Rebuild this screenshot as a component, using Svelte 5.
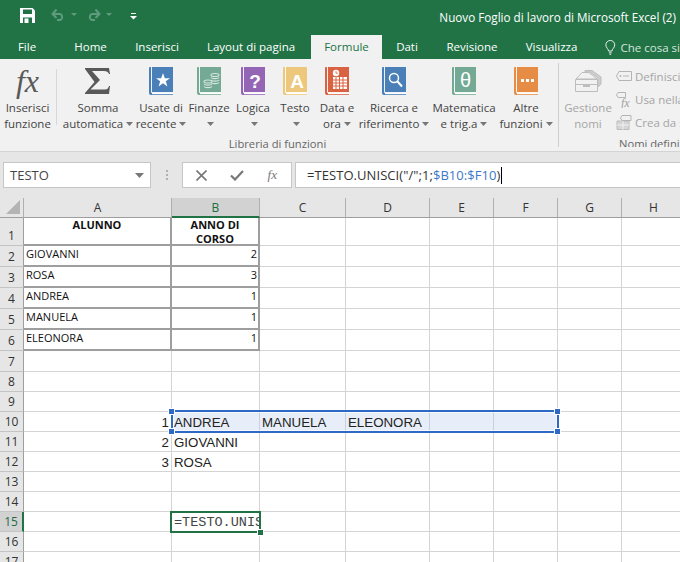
<script>
  // Excel: scheda Formule con TESTO.UNISCI in modifica
  const tabs = ['File', 'Home', 'Inserisci', 'Layout di pagina', 'Formule', 'Dati', 'Revisione', 'Visualizza']
  const columns = ['A', 'B', 'C', 'D', 'E', 'F', 'G', 'H']
  const rows = Array.from({ length: 17 }, (_, i) => i + 1)

  const values = {
    A1: 'ALUNNO', B1: 'ANNO DI CORSO',
    A2: 'GIOVANNI', B2: '2',
    A3: 'ROSA', B3: '3',
    A4: 'ANDREA', B4: '1',
    A5: 'MANUELA', B5: '1',
    A6: 'ELEONORA', B6: '1',
    A10: '1', B10: 'ANDREA', C10: 'MANUELA', D10: 'ELEONORA',
    A11: '2', B11: 'GIOVANNI',
    A12: '3', B12: 'ROSA',
    B15: '=TESTO.UNIS'
  }

  function cellClass(col, row) {
    const list = ['cell']
    if (row <= 6 && (col === 'A' || col === 'B')) list.push('tbl')
    if (row === 1) list.push('head')
    if (row >= 2 && row <= 6 && col === 'B') list.push('num')
    if (row >= 10 && row <= 12) list.push('big')
    if (row >= 10 && row <= 12 && col === 'A') list.push('right')
    if (row === 10 && 'BCDEF'.includes(col)) list.push('sel')
    if (row === 15 && col === 'B') list.push('edit')
    return list.join(' ')
  }
</script>

{#snippet caret()}
  <svg class="caret" width="7" height="4" viewBox="0 0 7 4"><path d="M0 0h7L3.5 4z" fill="#777" /></svg>
{/snippet}

{#snippet book(color)}
  <path d="M0 1Q0 0 1 0H24V28H2Q0 28 0 26z" fill={color} />
  <path d="M2.5 0V25.5H24" fill="none" stroke="#fff" stroke-width="1" opacity=".9" />
  <path d="M3 26.5H24" stroke="#fff" stroke-width="1.4" />
{/snippet}

<div class="app">
  <header class="title">
    <div class="qat">
      <svg class="save" width="15" height="15" viewBox="0 0 15 15">
        <path d="M0 0H12.5L15 2.5V15H0z" fill="#fff" />
        <path d="M3 1.5H12V6H3z" fill="#217346" />
        <path d="M3 9.5H12V15H3z" fill="#217346" />
        <path d="M4.5 10.5H8.5V15H4.5z" fill="#fff" />
      </svg>
      <svg class="undo" width="15" height="13" viewBox="0 0 15 13">
        <path d="M1.5 6H9.5A3.5 3.5 0 0 1 9.5 12H6M5.5 1.5L1.5 6L5.5 10" fill="none" stroke="#5f9c7d" stroke-width="2" />
      </svg>
      <svg class="qcaret" width="6" height="3" viewBox="0 0 6 3"><path d="M0 0h6L3 3z" fill="#5f9c7d" /></svg>
      <svg class="redo" width="15" height="13" viewBox="0 0 15 13">
        <path d="M13.5 6H5.5A3.5 3.5 0 0 0 5.5 12H9M9.5 1.5L13.5 6L9.5 10" fill="none" stroke="#5f9c7d" stroke-width="2" />
      </svg>
      <svg class="qcaret" width="6" height="3" viewBox="0 0 6 3"><path d="M0 0h6L3 3z" fill="#5f9c7d" /></svg>
      <svg class="custom" width="7" height="7" viewBox="0 0 7 7">
        <path d="M1 0.5H6" stroke="#fff" /><path d="M0 3H7L3.5 6.5z" fill="#fff" />
      </svg>
    </div>
    <div class="doc">Nuovo Foglio di lavoro di Microsoft Excel (2)</div>
  </header>

  <nav class="tabs">
    {#each tabs as tab}
      <div class="tab" class:home={tab === 'Home'} class:current={tab === 'Formule'}>{tab}</div>
    {/each}
    <div class="tell">
      <svg width="12" height="17" viewBox="0 0 12 17">
        <path d="M4 12.5C4 10 1 9 1 5.5A5 5 0 0 1 11 5.5C11 9 8 10 8 12.5zM4.5 14.5H7.5M5 16.2H7" fill="none" stroke="#fff" stroke-width="1" />
      </svg>
      <span>Che cosa si</span>
    </div>
  </nav>

  <section class="ribbon">
    <div class="library">
      <div class="cmds">
        <div class="cmd w-fx">
          <span class="fx-big">fx</span>
          <span class="lbl">Inserisci</span>
          <span class="lbl">funzione</span>
        </div>
        <div class="thin"></div>
        <div class="cmd w-sum">
          <svg class="ico" width="26" height="28" viewBox="0 0 26 28">
            <path d="M0 1H24L25 7H24Q23 4 19 4H7L15 13L5.500 22.500H20Q23 22.500 24 19H25L24 27H0V26L9.500 15L0 2z" fill="#595959" />
          </svg>
          <span class="lbl">Somma</span>
          <span class="lbl">automatica{@render caret()}</span>
        </div>
        <div class="cmd w-use">
          <svg class="ico" width="24" height="28" viewBox="0 0 24 28">
            {@render book('#4a7fb8')}
            <path d="M14 6L15.800 11.200H21L16.800 14.300L18.400 19.500L14 16.300L9.600 19.500L11.200 14.300L7 11.200H12.200z" fill="#fff" />
          </svg>
          <span class="lbl">Usate di</span>
          <span class="lbl">recente{@render caret()}</span>
        </div>
        <div class="cmd w-fin">
          <svg class="ico" width="24" height="28" viewBox="0 0 24 28">
            {@render book('#74a995')}
            <g fill="none" stroke="#d8e8e1" stroke-width="1.100">
              <ellipse cx="18" cy="8" rx="4" ry="1.500" />
              <path d="M14 10.500C15 12 21 12 22 10.500M14 13C15 14.500 21 14.500 22 13M14 15.500C15 17 21 17 22 15.500" />
              <ellipse cx="11" cy="14.500" rx="4" ry="1.500" />
              <path d="M7 17C8 18.500 14 18.500 15 17M7 19.500C8 21 14 21 15 19.500" />
            </g>
          </svg>
          <span class="lbl">Finanze</span>
          {@render caret()}
        </div>
        <div class="cmd w-log">
          <svg class="ico" width="24" height="28" viewBox="0 0 24 28">
            {@render book('#9565b5')}
            <text x="14" y="21" class="glyph">?</text>
          </svg>
          <span class="lbl">Logica</span>
          {@render caret()}
        </div>
        <div class="cmd w-txt">
          <svg class="ico" width="24" height="28" viewBox="0 0 24 28">
            {@render book('#edc77c')}
            <text x="14" y="21" class="glyph">A</text>
          </svg>
          <span class="lbl">Testo</span>
          {@render caret()}
        </div>
        <div class="cmd w-dat">
          <svg class="ico" width="24" height="28" viewBox="0 0 24 28">
            {@render book('#d96243')}
            <circle cx="11" cy="6" r="3.200" fill="#fff" />
            <path d="M11 4V6.200H13" fill="none" stroke="#d96243" stroke-width=".8" />
            <path d="M8 10H22V22H8z" fill="#fff" />
            <path d="M8 13H22M8 16H22M8 19H22M11 10V22M14.500 10V22M18 10V22" stroke="#d96243" stroke-width="1" />
          </svg>
          <span class="lbl">Data e</span>
          <span class="lbl">ora{@render caret()}</span>
        </div>
        <div class="cmd w-ric">
          <svg class="ico" width="24" height="28" viewBox="0 0 24 28">
            {@render book('#4a7fb8')}
            <circle cx="12" cy="11" r="4.500" fill="none" stroke="#fff" stroke-width="1.500" />
            <path d="M15.500 14.500L20 19.500" stroke="#fff" stroke-width="2" />
          </svg>
          <span class="lbl">Ricerca e</span>
          <span class="lbl">riferimento{@render caret()}</span>
        </div>
        <div class="cmd w-mat">
          <svg class="ico" width="24" height="28" viewBox="0 0 24 28">
            {@render book('#74a995')}
            <text x="13.500" y="20" class="glyph thin-glyph">θ</text>
          </svg>
          <span class="lbl">Matematica</span>
          <span class="lbl">e trig.a{@render caret()}</span>
        </div>
        <div class="cmd w-alt">
          <svg class="ico" width="24" height="28" viewBox="0 0 24 28">
            {@render book('#e68c45')}
            <path d="M7 12h3v3H7zM12 12h3v3h-3zM17 12h3v3h-3z" fill="#fff" />
          </svg>
          <span class="lbl">Altre</span>
          <span class="lbl">funzioni{@render caret()}</span>
        </div>
      </div>
      <div class="group-name lib-name">Libreria di funzioni</div>
    </div>

    <div class="names">
      <div class="names-cmds">
        <div class="cmd w-ges off">
          <svg class="ico" width="28" height="24" viewBox="0 0 28 24">
            <g fill="#f1f1f1" stroke="#bdbdbd" stroke-width="1">
              <path d="M11 1.500H18L27 8V15L24 18V9L16 3H11z" fill="#cfcfcf" />
              <path d="M8 3.500H15L23 10H2z" />
              <path d="M1.500 10.500H23.500V22.500H1.500z" />
            </g>
            <path d="M2 15.500H23" stroke="#bdbdbd" />
            <path d="M9 15.500H16V18H9z" fill="#bdbdbd" />
          </svg>
          <span class="lbl">Gestione</span>
          <span class="lbl">nomi</span>
        </div>
        <div class="small-list">
          <div class="small">
            <svg width="16" height="12" viewBox="0 0 16 12">
              <path d="M3 .5H15.500V9.500H3L.5 5z" fill="none" stroke="#b5b5b5" />
              <circle cx="4.500" cy="5" r="1" fill="#b5b5b5" />
              <path d="M7 5H13" stroke="#b5b5b5" />
            </svg>
            <span>Definisci</span>
          </div>
          <div class="small">
            <svg width="16" height="16" viewBox="0 0 16 16">
              <path d="M2 .5H9.500V5.500H2L.5 3z" fill="none" stroke="#b5b5b5" />
              <text x="5" y="14.500" class="small-fx">fx</text>
            </svg>
            <span>Usa nella</span>
          </div>
          <div class="small">
            <svg width="16" height="15" viewBox="0 0 16 15">
              <path d="M1 6H13V14.500H1z" fill="#d5d5d5" stroke="#bdbdbd" />
              <path d="M7 6V14.500M1 10H13" stroke="#f1f1f1" />
              <path d="M6 .5H15V5.500H6L4.500 3z" fill="#f1f1f1" stroke="#b5b5b5" />
            </svg>
            <span>Crea da s</span>
          </div>
        </div>
      </div>
      <div class="group-name names-name">Nomi definit</div>
    </div>
  </section>

  <section class="formula-row">
    <div class="name-box">
      <span>TESTO</span>
      <svg width="9" height="5" viewBox="0 0 9 5"><path d="M0 0h9L4.500 5z" fill="#777" /></svg>
    </div>
    <div class="grip"><i></i><i></i><i></i></div>
    <div class="fn-box">
      <svg width="11" height="11" viewBox="0 0 11 11"><path d="M.5 .5L10.500 10.500M10.500 .5L.5 10.500" stroke="#777" stroke-width="1.600" /></svg>
      <svg width="14" height="11" viewBox="0 0 14 11"><path d="M1 5.500L5 9.500L13 1" fill="none" stroke="#777" stroke-width="2.200" /></svg>
      <span class="fn-fx">fx</span>
    </div>
    <div class="input">
      =TESTO.UNISCI("/";1;<span class="ref">$B10:$F10</span>)<span class="cursor"></span>
    </div>
  </section>

  <section class="sheet">
    <div class="corner"><svg width="14" height="14" viewBox="0 0 14 14"><path d="M14 0V14H0z" fill="#b4b4b4" /></svg></div>
    {#each columns as col}
      <div class="col-h" class:on={col === 'B'}>{col}</div>
    {/each}
    {#each rows as row}
      <div class="row-h" class:on={row === 15} class:edge={row <= 6}>{row}</div>
      {#each columns as col}
        <div class={cellClass(col, row)}>{#if values[col + row]}<span>{values[col + row]}</span>{/if}</div>
      {/each}
    {/each}

    <!-- intervallo $B10:$F10 -->
    <div class="range">
      <i class="h tl"></i><i class="h bl"></i><i class="h tr"></i><i class="h br"></i>
    </div>
    <!-- cella attiva -->
    <div class="editor"><i></i></div>
  </section>
</div>

<style>
  :global(body) {
    margin: 0;
    background: #fff;
  }

  .app {
    position: relative;
    width: 680px;
    height: 562px;
    overflow: hidden;
    font-family: "Open Sans", "Noto Sans", sans-serif;
    color: #444;
  }

  /* barra del titolo */
  .title {
    height: 35px;
    background: #217346;
    display: flex;
    justify-content: space-between;
    overflow: hidden;
  }

  .qat {
    display: flex;
    align-items: flex-start;
  }

  .save { margin: 8px 0 0 20px; }
  .undo { margin: 8px 0 0 16px; }
  .redo { margin: 8px 0 0 9px; }
  .qcaret { margin: 13px 0 0 5px; }
  .custom { margin: 13px 0 0 18px; }

  .doc {
    align-self: flex-start;
    margin: 9px 4px 0 0;
    white-space: nowrap;
    color: #fff;
    font-size: 11.700px;
    line-height: 17px;
  }

  /* schede */
  .tabs {
    height: 24px;
    background: #217346;
    display: grid;
    grid-template-columns: 54px 69px 68px 120px 71px 50px 80px 79px 1fr;
    font-size: 11.500px;
    color: #fff;
  }

  .tab {
    text-align: center;
    line-height: 24px;
    white-space: nowrap;
  }

  .home { padding-left: 4px; }

  .tab.current {
    background: #f1f1f1;
    color: #217346;
  }

  .tell {
    display: flex;
    align-items: center;
    gap: 5px;
    padding-left: 14px;
    white-space: nowrap;
    overflow: hidden;
    color: #d5e5dc;
  }

  /* barra multifunzione */
  .ribbon {
    height: 93px;
    box-sizing: border-box;
    background: #f1f1f1;
    border-bottom: 1px solid #d4d4d4;
    display: flex;
    overflow: hidden;
    font-size: 11.500px;
    color: #444;
  }

  .library {
    width: 559px;
    box-sizing: border-box;
    flex: none;
    border-right: 1px solid #d0d0d0;
    margin: 4px 0;
  }

  .cmds {
    display: flex;
    height: 74px;
  }

  .cmd {
    display: flex;
    flex-direction: column;
    align-items: center;
    white-space: nowrap;
    flex: none;
    padding-top: 4px;
  }

  .lbl {
    line-height: 16px;
    display: block;
  }

  .ico {
    height: 28px;
    margin-bottom: 5px;
    flex: none;
  }

  .caret {
    margin: 6px 0 0 3px;
    vertical-align: 2px;
  }

  .lbl .caret { margin: 0 0 0 3px; }

  .w-fx { width: 55px; }
  .w-sum { width: 70px; }
  .w-use { width: 56px; }
  .w-fin { width: 40px; }
  .w-log { width: 48px; }
  .w-txt { width: 36px; }
  .w-dat { width: 48px; }
  .w-ric { width: 66px; }
  .w-mat { width: 74px; }
  .w-alt { width: 50px; }
  .w-ges { width: 46px; margin-left: 6px; color: #a5a5a5; }

  .thin {
    width: 1px;
    height: 56px;
    margin: 6px 6px 0 1px;
    background: #d8d8d8;
    flex: none;
  }

  .fx-big {
    font: italic 32px/28px "Liberation Serif", serif;
    color: #595959;
    height: 28px;
    margin-bottom: 5px;
  }

  .glyph {
    font: 700 19px "Liberation Sans", sans-serif;
    fill: #fff;
    text-anchor: middle;
  }

  .thin-glyph {
    font-weight: 400;
    font-size: 20px;
  }

  .small-fx {
    font: italic 12px "Liberation Serif", serif;
    fill: #a0a0a0;
  }

  .group-name {
    font-size: 11.200px;
    line-height: 14px;
    color: #666;
    margin-top: 0;
  }

  .lib-name {
    text-align: center;
    padding-right: 3px;
  }

  .names {
    flex: none;
    width: 121px;
    margin: 4px 0;
    overflow: hidden;
  }

  .names-cmds {
    display: flex;
    height: 74px;
  }

  .names-name {
    text-align: left;
    padding-left: 60px;
    white-space: nowrap;
  }

  .small-list {
    padding: 2px 0 0 5px;
    color: #a5a5a5;
    white-space: nowrap;
  }

  .small {
    display: flex;
    align-items: center;
    gap: 3px;
    height: 23px;
  }

  .small svg {
    flex: none;
  }

  /* barra della formula */
  .formula-row {
    height: 46px;
    background: #e6e6e6;
    display: flex;
    align-items: flex-start;
    padding-top: 10px;
    box-sizing: border-box;
    font-size: 13px;
  }

  .name-box,
  .fn-box,
  .input {
    height: 26px;
    box-sizing: border-box;
    background: #fff;
    border: 1px solid #c6c6c6;
    display: flex;
    align-items: center;
    flex: none;
  }

  .name-box {
    width: 148px;
    margin-left: 3px;
    padding: 0 6px;
    justify-content: space-between;
    color: #444;
  }

  .grip {
    width: 31px;
    flex: none;
    display: flex;
    flex-direction: column;
    align-items: center;
    gap: 2px;
    padding-top: 8px;
  }

  .grip i {
    width: 2px;
    height: 2px;
    background: #b0b0b0;
  }

  .fn-box {
    width: 110px;
    padding: 0 14px 0 13px;
    justify-content: space-between;
  }

  .fn-fx {
    font: italic 13px "Liberation Serif", serif;
    color: #777;
  }

  .input {
    width: 385px;
    margin-left: 3px;
    padding-left: 11px;
    white-space: pre;
    color: #333;
    border-right: 0;
    letter-spacing: .06px;
  }

  .ref { color: #3b78c9; }

  .cursor {
    width: 1px;
    height: 17px;
    background: #000;
    margin-left: 1px;
  }

  /* foglio */
  .sheet {
    position: relative;
    height: 364px;
    overflow: hidden;
    display: grid;
    grid-template-columns: 24px 148px 88px 86px 84px 64px 64px 64px 64px;
    grid-template-rows: 20px 28px repeat(6, 21px) repeat(10, 20px);
    background: #fff;
    font-size: 12px;
  }

  .corner {
    background: #e6e6e6;
    border-right: 1px solid #b0b0b0;
    border-bottom: 1px solid #9e9e9e;
    box-sizing: border-box;
    display: flex;
    align-items: flex-end;
    justify-content: flex-end;
    padding: 0 3px 3px 0;
  }

  .col-h {
    background: #e6e6e6;
    border-right: 1px solid #b0b0b0;
    border-bottom: 1px solid #9e9e9e;
    box-sizing: border-box;
    text-align: center;
    line-height: 20px;
    color: #333;
  }

  .col-h.on {
    background: #d2d2d2;
    color: #1f6b43;
    border-bottom: 2px solid #217346;
  }

  .row-h {
    background: #e6e6e6;
    border-right: 1px solid #9e9e9e;
    border-bottom: 1px solid #c4c4c4;
    box-sizing: border-box;
    text-align: center;
    display: flex;
    align-items: flex-end;
    justify-content: center;
    padding-bottom: 1px;
    line-height: 16px;
    color: #333;
  }

  .row-h.on {
    background: #d2d2d2;
    color: #1f6b43;
    border-right: 2px solid #217346;
  }

  .cell {
    border-right: 1px solid #d4d4d4;
    border-bottom: 1px solid #d4d4d4;
    box-sizing: border-box;
    overflow: hidden;
    white-space: nowrap;
    padding: 0 2px;
  }

  .tbl {
    border-right: 2px solid #9e9e9e;
    border-bottom: 2px solid #9e9e9e;
    font-size: 11px;
    line-height: 15px;
    color: #111;
    padding: 0 1px 0 2px;
  }

  .head {
    font-weight: 700;
    text-align: center;
    white-space: normal;
    line-height: 14px;
    padding: 0 8px;
  }

  .num { text-align: right; }

  .big {
    font: 13.300px/21px "Liberation Sans", sans-serif;
    color: #222;
    padding: 0 2px;
  }

  .right {
    text-align: right;
    overflow: visible;
  }

  .sel {
    background: #e7eef9;
    border-right-color: #c8d0dc;
    border-bottom-color: #e7eef9;
  }

  .edit {
    font: 13.500px/22px "Liberation Mono", monospace;
    color: #444;
    padding-left: 2px;
  }

  .range {
    position: absolute;
    left: 171px;
    top: 212px;
    width: 388px;
    height: 23px;
    box-sizing: border-box;
    border: 2px solid #2f69c6;
    outline: 1px solid rgba(255, 255, 255, .6);
    outline-offset: -3px;
  }

  .h {
    position: absolute;
    width: 5px;
    height: 5px;
    background: #2f69c6;
    outline: 1px solid #fff;
  }

  .tl { left: -4px; top: -3px; }
  .bl { left: -4px; bottom: -3px; }
  .tr { right: -3px; top: -3px; }
  .br { right: -3px; bottom: -3px; }

  .editor {
    position: absolute;
    left: 170px;
    top: 313px;
    width: 91px;
    height: 22px;
    box-sizing: border-box;
    border: 2px solid #217346;
  }

  .editor i {
    position: absolute;
    right: -4px;
    bottom: -4px;
    width: 5px;
    height: 5px;
    background: #217346;
    outline: 1px solid #fff;
  }
</style>
